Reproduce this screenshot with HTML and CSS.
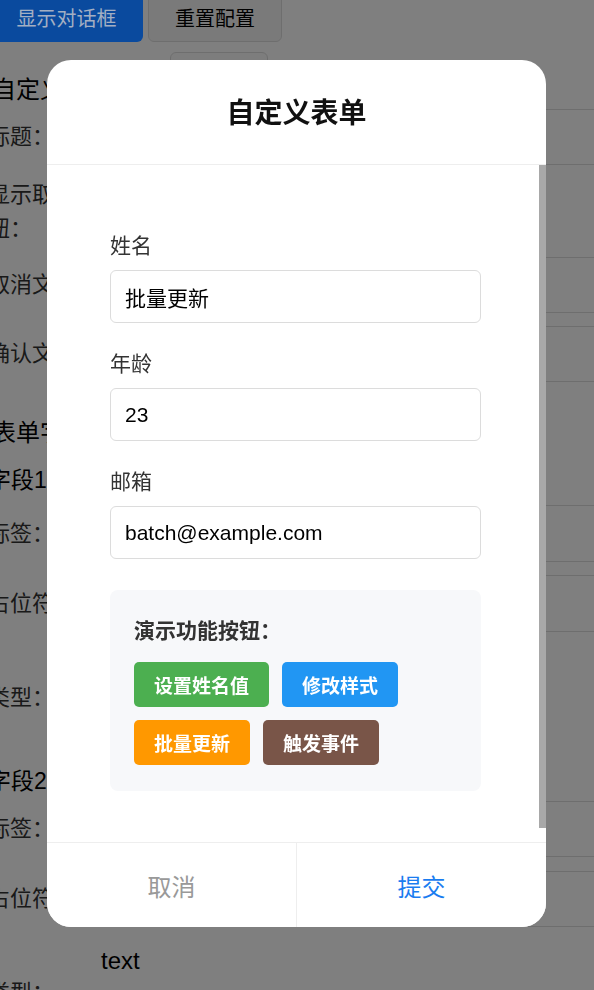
FILE: index.html
```html
<!DOCTYPE html>
<html lang="zh">
<head>
<meta charset="utf-8">
<title>自定义表单</title>
<link rel="stylesheet" href="styles.css">
</head>
<body>
<div class="page">
  <div class="toolbar">
    <button class="btn-primary">显示对话框</button>
    <button class="btn-default">重置配置</button>
  </div>
  <div class="stub"></div>
  <h2 class="sec-title">自定义对话框配置</h2>
  <div class="row"><span class="lbl">标题：</span><div class="field"></div></div>
  <div class="row row-tall"><span class="lbl lbl-wrap">显示取消按钮：</span></div>
  <div class="row r-cancel"><span class="lbl">取消文本：</span><div class="field"></div></div>
  <div class="row r-confirm"><span class="lbl">确认文本：</span><div class="field"></div></div>
  <h2 class="sec-title sec-fields">表单字段</h2>
  <h3 class="sub-title">字段1</h3>
  <div class="row r-label"><span class="lbl">标签：</span><div class="field"></div></div>
  <div class="row r-ph"><span class="lbl">占位符：</span><div class="field"></div></div>
  <div class="val">text</div>
  <div class="row r-type"><span class="lbl">类型：</span></div>
  <h3 class="sub-title sub-2">字段2</h3>
  <div class="row r-label2"><span class="lbl">标签：</span><div class="field"></div></div>
  <div class="row r-ph2"><span class="lbl">占位符：</span><div class="field"></div></div>
  <div class="val">text</div>
  <div class="row r-type"><span class="lbl">类型：</span></div>
</div>

<div class="overlay">
  <div class="modal">
    <div class="modal-header">自定义表单</div>
    <div class="modal-body">
      <div class="body-content">
        <div class="form-item">
          <label class="form-label">姓名</label>
          <input class="form-input" type="text" value="批量更新">
        </div>
        <div class="form-item">
          <label class="form-label">年龄</label>
          <input class="form-input" type="text" value="23">
        </div>
        <div class="form-item">
          <label class="form-label">邮箱</label>
          <input class="form-input" type="text" value="batch@example.com">
        </div>
        <div class="demo">
          <div class="demo-title">演示功能按钮：</div>
          <div class="demo-btns">
            <button class="dbtn green">设置姓名值</button>
            <button class="dbtn blue">修改样式</button>
            <button class="dbtn orange">批量更新</button>
            <button class="dbtn brown">触发事件</button>
          </div>
        </div>
      </div>
      <div class="scroll-track"><div class="scroll-thumb"></div></div>
    </div>
    <div class="modal-footer">
      <button class="fbtn cancel">取消</button>
      <button class="fbtn ok">提交</button>
    </div>
  </div>
</div>
</body>
</html>
```

FILE: styles.css
```css
* { box-sizing: border-box; }

html, body {
  margin: 0;
  padding: 0;
  background: #fff;
  overflow: hidden;
  height: 990px;
}

body {
  font-family: "Liberation Sans", "Noto Sans CJK SC", sans-serif;
  color: #333;
}

/* ---------- background page (scrolled) ---------- */
.page {
  width: 720px;
  margin-left: -12px;
  margin-top: -8px;
}

.toolbar {
  display: flex;
  gap: 5px;
  margin-left: 2px;
  height: 50px;
}

.toolbar button {
  font-family: inherit;
  font-size: 20px;
  height: 50px;
  border-radius: 6px;
  padding: 0;
  cursor: pointer;
}

.btn-primary {
  position: relative;
  z-index: 11;
  width: 153px;
  background: #0a4a9e;
  color: #a3afc3;
  border: none;
}

.btn-default {
  width: 134px;
  background: #f5f5f5;
  border: 1px solid #ddd;
  color: #000;
}

.stub {
  width: 98px;
  height: 20px;
  margin: 10px 0 0 182px;
  border: 1px solid #ddd;
  border-radius: 6px;
  background: #fafafa;
}

.sec-title {
  margin: 2px 0 0 4px;
  font-size: 24px;
  line-height: 32px;
  font-weight: 400;
  color: #000;
}

.sec-fields { margin-top: 35px; }

.sub-title {
  margin: 16px 0 0 0;
  font-size: 23px;
  line-height: 30px;
  font-weight: 400;
  color: #000;
}

.sub-2 { margin-top: 52px; }

.row {
  display: flex;
  align-items: center;
  margin-top: 3px;
}

.lbl {
  flex: 0 0 112px;
  width: 112px;
  font-size: 22px;
  line-height: 32px;
  color: #333;
  white-space: nowrap;
}

.lbl-wrap {
  white-space: normal;
  width: 112px;
  line-height: 34px;
  word-break: break-all;
}

.row-tall { margin-top: 13px; min-height: 68px; }
.r-cancel { margin-top: 11px; }
.r-confirm { margin-top: 13px; }
.r-label { margin-top: 10px; }
.r-ph { margin-top: 13px; }
.r-type { margin-top: 1px; }
.r-label2 { margin-top: 5px; }
.r-ph2 { margin-top: 14px; }

.field {
  flex: 1;
  height: 56px;
  border: 1px solid #ddd;
  border-radius: 4px;
  background: #fff;
}

.r-ph .field, .r-label .field { height: 57px; }

.val {
  margin: 19px 0 0 113px;
  font-size: 24px;
  line-height: 30px;
  color: #000;
}

/* ---------- overlay / modal ---------- */
.overlay {
  position: fixed;
  inset: 0;
  z-index: 10;
  background: rgba(0, 0, 0, 0.5);
  display: flex;
  justify-content: center;
  align-items: flex-start;
  padding: 60px 1px 0 0;
}

.modal {
  width: 499px;
  height: 867px;
  background: #fff;
  border-radius: 24px;
  overflow: hidden;
  display: flex;
  flex-direction: column;
}

.modal-header {
  flex: 0 0 105px;
  border-bottom: 1px solid #eee;
  display: flex;
  align-items: center;
  justify-content: center;
  font-size: 28px;
  font-weight: 700;
  color: #111;
  padding-bottom: 2px;
}

.modal-body {
  flex: 1;
  display: flex;
  min-height: 0;
}

.body-content {
  flex: 1;
  overflow: hidden;
  padding: 69px 58px 0 63px;
}

.scroll-track {
  flex: 0 0 7px;
  background: #fff;
}

.scroll-thumb {
  height: 663px;
  background: #a8a8a8;
}

.form-item {
  display: flex;
  flex-direction: column;
  margin-bottom: 29px;
}

.form-item:nth-child(3) { margin-bottom: 31px; }

.form-label {
  font-size: 21px;
  line-height: 24px;
  color: #333;
  margin-bottom: 12px;
}

.form-input {
  height: 53px;
  width: 100%;
  border: 1px solid #dcdcdc;
  border-radius: 6px;
  padding: 0 14px;
  font-family: inherit;
  font-size: 21px;
  color: #000;
  background: #fff;
  outline: none;
}

.demo {
  background: #f7f8fa;
  border-radius: 8px;
  padding: 29px 24px 26px 24px;
}

.demo-title {
  font-size: 21px;
  line-height: 24px;
  font-weight: 700;
  color: #333;
  margin-bottom: 19px;
}

.demo-btns {
  display: flex;
  flex-wrap: wrap;
  gap: 13px;
}

.dbtn {
  height: 45px;
  padding: 0 20px;
  border: none;
  border-radius: 5px;
  font-family: inherit;
  font-size: 19px;
  font-weight: 700;
  color: #fff;
  cursor: pointer;
}

.green { background: #4caf50; }
.blue { background: #2196f3; }
.orange { background: #ff9800; }
.brown { background: #795548; }

.modal-footer {
  flex: 0 0 85px;
  border-top: 1px solid #eee;
  display: flex;
}

.fbtn {
  flex: 1;
  border: none;
  background: #fff;
  font-family: inherit;
  font-size: 24px;
  cursor: pointer;
}

.fbtn.cancel {
  color: #999;
  border-right: 1px solid #eee;
}

.fbtn.ok {
  color: #1a7cf0;
}
```
